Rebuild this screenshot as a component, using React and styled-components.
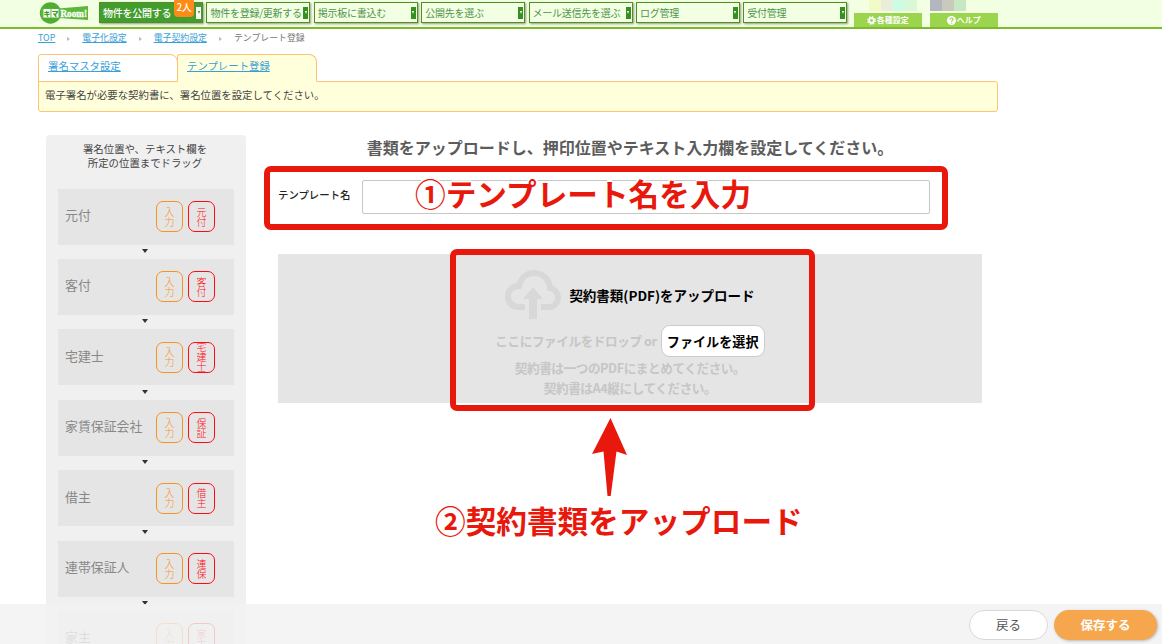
import React from 'react';
import styled, { createGlobalStyle } from 'styled-components';

const GlobalStyle = createGlobalStyle`
  * { box-sizing: border-box; }
  body {
    margin: 0;
    background: #fff;
    color: #555;
    font-family: "Noto Sans CJK JP", sans-serif;
    overflow: hidden;
  }
`;

const Page = styled.div`
  position: relative;
  width: 1162px;
  height: 644px;
  overflow: hidden;
`;

/* header */
const Header = styled.header`
  display: flex;
  height: 29px;
  padding: 0 0 0 38px;
  background: #f3ffe3;
  border-bottom: 2px solid #7dbb2c;
`;

const Logo = styled.svg`
  width: 52px;
  height: 26px;
  margin-right: 9px;
`;

const Nav = styled.nav`
  display: flex;
  gap: 3.4px;
  padding-top: 2px;
`;

const NavButton = styled.div`
  position: relative;
  display: flex;
  justify-content: space-between;
  align-items: center;
  width: 104px;
  height: 21px;
  padding: 0 1px 0 3px;
  border: 1px solid #4f9020;
  background: ${p => (p.$active ? '#439d2d' : '#f3ffe3')};
  color: ${p => (p.$active ? '#fff' : '#4f944c')};
  font-size: 10px;
  font-weight: ${p => (p.$active ? 500 : 400)};
  letter-spacing: -0.25px;
  line-height: 18px;
  white-space: nowrap;
  box-shadow: 1px 1px 2px rgba(0, 0, 0, 0.4);
`;

const Caret = styled.span`
  display: flex;
  align-items: center;
  justify-content: center;
  width: 5px;
  height: 12px;
  background: ${p => (p.$active ? '#fff' : '#35911f')};

  &::after {
    content: "";
    border: 1.5px solid transparent;
    border-top: 3px solid ${p => (p.$active ? '#35911f' : '#fff')};
    border-bottom: 0;
  }
`;

const Badge = styled.span`
  position: absolute;
  top: -5px;
  left: 74px;
  width: 20px;
  height: 19px;
  border-radius: 4px;
  background: #ff8a16;
  color: #fff;
  font-size: 10px;
  line-height: 18px;
  text-align: center;
`;

const Tools = styled.div`
  display: flex;
  gap: 8px;
  margin-left: 6.4px;
`;

const Tool = styled.div`
  display: flex;
  flex-direction: column;
  justify-content: space-between;
  width: 68px;
`;

const Swatches = styled.div`
  display: flex;
  height: 11px;
  padding-left: ${p => p.$indent || 0}px;
`;

const Swatch = styled.span`
  width: 12.2px;
  background: ${p => p.$color};
`;

const ToolLabel = styled.div`
  display: flex;
  align-items: center;
  justify-content: center;
  gap: 1px;
  height: 14px;
  background: #9bd44d;
  color: #fff;
  font-size: 8px;
  font-weight: 700;
  line-height: 14px;
`;

/* breadcrumb and tabs */
const Breadcrumb = styled.div`
  display: flex;
  height: 25px;
  padding: 2px 0 0 38px;
  font-size: 8.9px;
  line-height: 14px;
  color: #777;
`;

const Crumb = styled.a`
  color: #3a9fd8;
  text-decoration: underline;
`;

const Sep = styled.span`
  width: 27px;
  height: 16px;
  display: flex;
  align-items: center;
  justify-content: center;

  &::after {
    content: "";
    border: 2px solid transparent;
    border-left: 3px solid #bbb;
    border-right: 0;
  }
`;

const Tabs = styled.div`
  display: flex;
  height: 28px;
  margin: 0 0 -1px 38px;
  position: relative;
`;

const Tab = styled.div`
  width: 140px;
  height: 28px;
  margin-right: -1px;
  padding: 2px 0 0 9px;
  border: 1px solid #fdc274;
  border-bottom-color: ${p => (p.$active ? '#ffffdc' : '#fdc274')};
  border-radius: 3px 8px 0 0;
  background: ${p => (p.$active ? '#ffffdc' : '#fff')};
  font-size: 10.4px;
  line-height: 18px;
`;

const Info = styled.div`
  width: 960px;
  height: 31px;
  margin-left: 38px;
  padding-left: 6px;
  border: 1px solid #fdc274;
  border-radius: 0 3px 3px 3px;
  background: #ffffdc;
  font-size: 10.4px;
  line-height: 26px;
  color: #444;
`;

const Content = styled.div`
  display: flex;
  gap: 32px;
  padding: 23px 0 0 46px;
`;

/* sidebar */
const Sidebar = styled.aside`
  width: 200px;
  height: 540px;
  padding: 7px 12px 0;
  border-radius: 4px;
  background: #f0f0f0;
`;

const Hint = styled.div`
  height: 46.6px;
  font-size: 10.4px;
  line-height: 14px;
  text-align: center;
  padding-right: 2px;
  color: #444;
`;

const Signer = styled.div`
  display: flex;
  align-items: center;
  height: 56px;
  padding: 0 19px 0 7px;
  background: #e5e5e5;
`;

const SignerName = styled.div`
  flex: 1;
  font-size: 12.9px;
  color: #888;
  padding-bottom: 4px;
  white-space: nowrap;
`;

const Stamp = styled.div`
  display: flex;
  flex-direction: column;
  align-items: center;
  justify-content: center;
  width: 27px;
  height: 31px;
  margin-left: 5px;
  border: 1px solid ${p => p.$color};
  border-radius: 7px;
  color: ${p => p.$color};
  font-size: 10px;
  font-weight: 300;
  line-height: 10px;
`;

const Arrow = styled.div`
  display: flex;
  align-items: center;
  justify-content: center;
  height: 14.4px;
  padding: 0 2px 2px 0;

  &::after {
    content: "";
    border: 3px solid transparent;
    border-top: 4px solid #333;
    border-bottom: 0;
  }
`;

/* main */
const Main = styled.main`
  width: 704px;
`;

const Title = styled.h1`
  margin: 0;
  height: 45px;
  font-size: 16px;
  font-weight: 700;
  line-height: 25px;
  text-align: center;
  white-space: nowrap;
  color: #5c5c5c;
`;

const Field = styled.label`
  display: flex;
  align-items: center;
  justify-content: space-between;
  width: 652px;
  height: 34px;
  font-size: 10.4px;
  font-weight: 500;
  line-height: 14px;
  color: #222;
`;

const FieldName = styled.span`
  padding-bottom: 4px;
`;

const Input = styled.input`
  width: 568px;
  height: 34px;
  margin: 0;
  border: 1px solid #c6c6c6;
  border-radius: 2px;
  background: #fff;
`;

const DropZone = styled.div`
  display: flex;
  flex-direction: column;
  align-items: center;
  height: 149px;
  margin-top: 40px;
  padding-top: 16px;
  background: #e5e5e5;
`;

const DropHead = styled.div`
  display: flex;
  align-items: center;
  gap: 8px;
  height: 50px;
  font-size: 13.5px;
  font-weight: 700;
  color: #000;
`;

const DropRow = styled.div`
  display: flex;
  align-items: center;
  height: 32px;
  margin: 5px 0 1px;
  gap: 4px;
`;

const Muted = styled.div`
  font-size: 12.6px;
  font-weight: 700;
  line-height: 20px;
  color: #c6c6c6;
  letter-spacing: ${p => p.$spacing || 0}px;
`;

const FileButton = styled.button`
  width: 104px;
  height: 32px;
  padding: 0;
  border: 1px solid #ccc;
  border-radius: 9px;
  background: #fff;
  color: #000;
  font: 700 13.1px/27px "Noto Sans CJK JP", sans-serif;
`;

/* guide marks drawn over the page */
const Frame = styled.div`
  position: absolute;
  left: ${p => p.$x}px;
  top: ${p => p.$y}px;
  width: ${p => p.$w}px;
  height: ${p => p.$h}px;
  border: 6px solid #e8190c;
  border-radius: 7px;
`;

const Note = styled.div`
  position: absolute;
  left: ${p => p.$x}px;
  top: ${p => p.$y}px;
  color: #e8190c;
  font-size: 30.65px;
  font-weight: 700;
  line-height: 40px;
  white-space: nowrap;
  text-shadow: 2px 0 #fff, -2px 0 #fff, 0 2px #fff, 0 -2px #fff, 1px 1px #fff, -1px -1px #fff;
`;

const Pointer = styled.svg`
  position: absolute;
  left: 590px;
  top: 416px;
  width: 40px;
  height: 82px;
`;

const Footer = styled.footer`
  position: absolute;
  left: 0;
  bottom: 0;
  display: flex;
  justify-content: flex-end;
  gap: 6px;
  width: 100%;
  height: 40px;
  padding: 6px 5px 0 0;
  background: rgba(242, 242, 242, 0.82);
`;

const Button = styled.button`
  width: ${p => (p.$primary ? 103 : 79)}px;
  height: 30px;
  padding: 0;
  border: ${p => (p.$primary ? '0' : '1px solid #d8d8d8')};
  border-radius: 15px;
  background: ${p => (p.$primary ? '#f6a64c' : '#fff')};
  color: ${p => (p.$primary ? '#fff' : '#555')};
  font-family: inherit;
  font-size: 12.5px;
  font-weight: ${p => (p.$primary ? 700 : 400)};
  line-height: 26px;
  box-shadow: ${p => (p.$primary ? '1px 1px 3px rgba(0, 0, 0, 0.25)' : 'none')};
`;

const menus = [
  '物件を公開する',
  '物件を登録/更新する',
  '掲示板に書込む',
  '公開先を選ぶ',
  'メール送信先を選ぶ',
  'ログ管理',
  '受付管理',
];

const signers = [
  { name: '元付', stamp: '元付' },
  { name: '客付', stamp: '客付' },
  { name: '宅建士', stamp: '宅建士' },
  { name: '家賃保証会社', stamp: '保証' },
  { name: '借主', stamp: '借主' },
  { name: '連帯保証人', stamp: '連保' },
  { name: '家主', stamp: '家主' },
];

function VerticalStamp({ text, color }) {
  return (
    <Stamp $color={color}>
      {text.split('').map(c => <span key={c}>{c}</span>)}
    </Stamp>
  );
}

function SiteLogo() {
  return (
    <Logo viewBox="0 0 52 26">
      <circle cx="12.5" cy="13" r="10.7" fill="#4fae2f" />
      <path d="M3 8.500L20 8.500L50 6V20L20 18H3Z" fill="#5cb83a" />
      <path d="M5.500 9H12.500V17.500H5.500ZM13.500 9H20.500V17.500H13.500Z" fill="#fff" />
      <text x="5.5" y="16" fontSize="7" fontWeight="900" letterSpacing="1" fill="#3c9a22">キマ</text>
      <text
        x="22.5" y="17" fontSize="9.5" fontWeight="700" fontFamily="Liberation Serif, serif"
        textLength="26.500" lengthAdjust="spacingAndGlyphs" fill="#fff" stroke="#fff" strokeWidth="0.300"
      >
        Room!
      </text>
    </Logo>
  );
}

function CloudIcon() {
  return (
    <svg width="56" height="50" viewBox="0 0 56 50">
      <path
        d="M20 37H14C7.500 37 3 32.500 3 26.500C3 20.500 7.500 16 14 16C16 8 21.500 3 29 3C38 3 44 9 45 18C50 19 53 23 53 28C53 33 49 37 44 37H36"
        fill="none" stroke="#d8d8d8" strokeWidth="6"
      />
      <path d="M28 17L38 29H32V49H24V29H18Z" fill="#d8d8d8" />
    </svg>
  );
}

function GearIcon() {
  return (
    <svg width="9" height="9" viewBox="0 0 9 9">
      <circle cx="4.5" cy="4.500" r="3.600" fill="none" stroke="#fff" strokeWidth="1.500" strokeDasharray="1.500 1.330" />
      <circle cx="4.5" cy="4.500" r="2.300" fill="none" stroke="#fff" strokeWidth="1.800" />
    </svg>
  );
}

function HelpIcon() {
  return (
    <svg width="9" height="9" viewBox="0 0 9 9">
      <circle cx="4.5" cy="4.500" r="4.500" fill="#fff" />
      <path
        d="M3 3.500C3 1.500 6 1.500 6 3.400C6 4.500 4.500 4.400 4.500 5.600M4.500 6.400V7.600"
        fill="none" stroke="#9bd44d" strokeWidth="1.200"
      />
    </svg>
  );
}

export default function App() {
  return (
    <>
      <GlobalStyle />
      <Page>
        <Header>
          <SiteLogo />
          <Nav>
            {menus.map((m, i) => (
              <NavButton key={m} $active={i === 0}>
                {m}
                {i === 0 && <Badge>2人</Badge>}
                <Caret $active={i === 0} />
              </NavButton>
            ))}
          </Nav>
          <Tools>
            <Tool>
              <Swatches $indent={15}>
                <Swatch $color="#f3fac9" />
                <Swatch $color="#e9edda" />
                <Swatch $color="#ccfde4" />
                <Swatch $color="#daf8d6" />
              </Swatches>
              <ToolLabel><GearIcon />各種設定</ToolLabel>
            </Tool>
            <Tool>
              <Swatches>
                <Swatch $color="#b4b6be" />
                <Swatch $color="#c8cbbc" />
                <Swatch $color="#c8e8c4" />
              </Swatches>
              <ToolLabel><HelpIcon />ヘルプ</ToolLabel>
            </Tool>
          </Tools>
        </Header>

        <Breadcrumb>
          <Crumb>TOP</Crumb><Sep />
          <Crumb>電子化設定</Crumb><Sep />
          <Crumb>電子契約設定</Crumb><Sep />
          <span>テンプレート登録</span>
        </Breadcrumb>

        <Tabs>
          <Tab><Crumb>署名マスタ設定</Crumb></Tab>
          <Tab $active><Crumb>テンプレート登録</Crumb></Tab>
        </Tabs>
        <Info>電子署名が必要な契約書に、署名位置を設定してください。</Info>

        <Content>
          <Sidebar>
            <Hint>署名位置や、テキスト欄を<br />所定の位置までドラッグ</Hint>
            {signers.map(s => (
              <React.Fragment key={s.name}>
                <Signer>
                  <SignerName>{s.name}</SignerName>
                  <VerticalStamp text="入力" color="#f7931e" />
                  <VerticalStamp text={s.stamp} color="#ff0a14" />
                </Signer>
                <Arrow />
              </React.Fragment>
            ))}
          </Sidebar>

          <Main>
            <Title>書類をアップロードし、押印位置やテキスト入力欄を設定してください。</Title>
            <Field>
              <FieldName>テンプレート名</FieldName>
              <Input />
            </Field>
            <DropZone>
              <DropHead>
                <CloudIcon />
                契約書類(PDF)をアップロード
              </DropHead>
              <DropRow>
                <Muted $spacing={-0.4}>ここにファイルをドロップ or</Muted>
                <FileButton>ファイルを選択</FileButton>
              </DropRow>
              <Muted $spacing={-0.4}>契約書は一つのPDFにまとめてください。</Muted>
              <Muted $spacing={-0.4}>契約書はA4縦にしてください。</Muted>
            </DropZone>
          </Main>
        </Content>

        <Footer>
          <Button>戻る</Button>
          <Button $primary>保存する</Button>
        </Footer>

        <Frame $x={264} $y={166} $w={684} $h={64} />
        <Note $x={415} $y={172.5}>①テンプレート名を入力</Note>
        <Frame $x={449.5} $y={248.5} $w={365} $h={162.5} />
        <Pointer viewBox="0 0 40 82">
          <path d="M20.500 2L37 39L26.500 35.500L20.700 80H17.500L13.500 35.500L2 38Z" fill="#e8190c" />
        </Pointer>
        <Note $x={435} $y={500}>②契約書類をアップロード</Note>
      </Page>
    </>
  );
}
